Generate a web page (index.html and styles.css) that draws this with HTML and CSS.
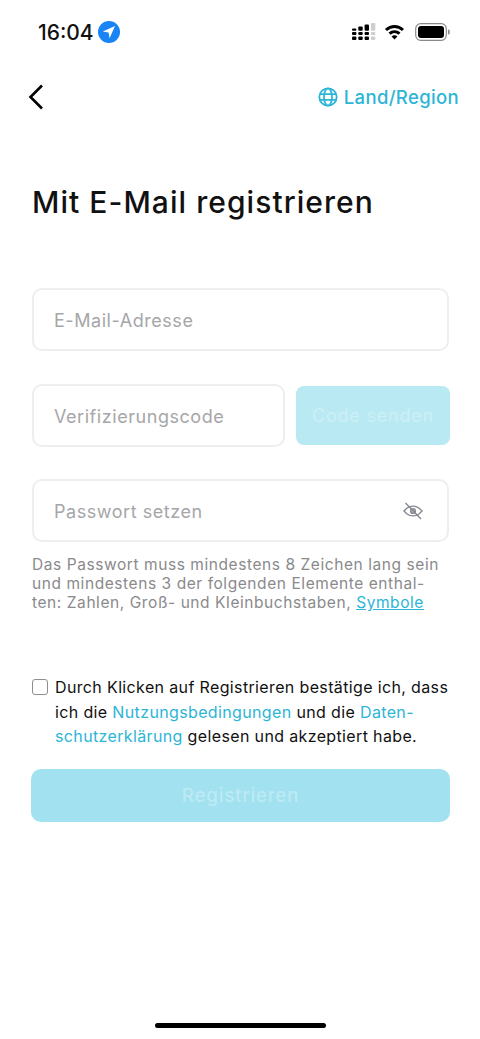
FILE: index.html
```html
<!DOCTYPE html>
<html lang="de">
<head>
  <meta charset="UTF-8" />
  <meta name="viewport" content="width=device-width, initial-scale=1.0"/>
  <title>Registrieren</title>
  <link rel="stylesheet" href="styles.css">
</head>
<body>

<div class="page">
  <div class="status-bar">
    <div class="status-left">
      <span class="time">16:04</span>
      <svg class="loc" width="22" height="22" viewBox="0 0 22 22">
        <circle cx="11" cy="11" r="11" fill="#1a84f5"/>
        <path d="M17 5 L4.8 10.4 L10.6 11.4 L11.6 17.2 Z" fill="#fff"/>
      </svg>
    </div>
    <div class="status-right">
      <svg class="signal" width="25" height="18" viewBox="0 0 25 18">
        <g fill="#000">
          <rect x="0" y="13.5" width="4.4" height="3.5" rx="1"/>
          <rect x="6.3" y="13.5" width="4.4" height="3.5" rx="1"/>
          <rect x="12.6" y="13.5" width="4.4" height="3.5" rx="1"/>
          <rect x="0" y="9" width="4.4" height="3" rx="1"/>
          <rect x="6.3" y="9" width="4.4" height="3" rx="1"/>
          <rect x="12.6" y="9" width="4.4" height="3" rx="1"/>
          <rect x="0" y="5.5" width="4.4" height="2.2" rx="1"/>
          <rect x="6.3" y="3.5" width="4.4" height="4.2" rx="1"/>
          <rect x="12.6" y="1.5" width="4.4" height="6.2" rx="1"/>
        </g>
        <g fill="#cfcfcf">
          <rect x="18.9" y="13.5" width="4.4" height="3.5" rx="1"/>
          <rect x="18.9" y="9" width="4.4" height="3" rx="1"/>
          <rect x="18.9" y="0" width="4.4" height="7.7" rx="1"/>
        </g>
      </svg>
      <svg width="21" height="16" viewBox="0 0 21 16">
        <path d="M2 6 C7 1.4 14 1.4 19 6" fill="none" stroke="#000" stroke-width="3"/>
        <path d="M5.5 9.6 C8.4 7 12.6 7 15.5 9.6" fill="none" stroke="#000" stroke-width="3"/>
        <path d="M10.5 15.5 L7.6 12.4 C9.3 11 11.7 11 13.4 12.4 Z" fill="#000"/>
      </svg>
      <svg width="35" height="18" viewBox="0 0 35 18">
        <rect x="0.7" y="0.7" width="30.6" height="16.6" rx="5" fill="none" stroke="#8a8a8a" stroke-width="1.2"/>
        <rect x="3" y="3" width="26" height="12" rx="3" fill="#000"/>
        <rect x="33" y="6.5" width="1.6" height="5" rx="0.8" fill="#8a8a8a"/>
      </svg>
    </div>
  </div>

  <div class="nav">
    <svg class="back" width="18" height="28" viewBox="0 0 18 28">
      <path d="M15 2.5 L3.5 14 L15 25.5" fill="none" stroke="#000" stroke-width="2.6"/>
    </svg>
    <div class="region">
      <svg width="20" height="20" viewBox="0 0 20 20" fill="none" stroke="#2cb5d6" stroke-width="1.8">
        <circle cx="10" cy="10" r="8.7"/>
        <ellipse cx="10" cy="10" rx="4" ry="8.7"/>
        <path d="M2 7.2 H18 M2 12.8 H18"/>
      </svg>
      <span>Land/Region</span>
    </div>
  </div>

  <h1 class="title">Mit E-Mail registrieren</h1>

  <div class="field field-email">
    <span class="placeholder">E-Mail-Adresse</span>
  </div>

  <div class="code-row">
    <div class="field field-code">
      <span class="placeholder">Verifizierungscode</span>
    </div>
    <button class="send-btn">Code senden</button>
  </div>

  <div class="field field-pass">
    <span class="placeholder">Passwort setzen</span>
    <svg width="20" height="18" viewBox="0 0 20 18" fill="none" stroke="#85888f" stroke-width="1.4">
      <path d="M1 9 L4 6 C7.5 3.6 12.5 3.6 16 6 L19 9 L16 12 C12.5 14.4 7.5 14.4 4 12 Z"/>
      <circle cx="10" cy="9" r="2.4" fill="#b5b7bb"/>
      <path d="M2.5 1 L18 17"/>
    </svg>
  </div>

  <p class="hint">Das Passwort muss mindestens 8 Zeichen lang sein<br>und mindestens 3 der folgenden Elemente enthal-<br>ten: Zahlen, Groß- und Kleinbuchstaben, <a class="link" href="#">Symbole</a></p>

  <div class="agree">
    <span class="checkbox"></span>
    <p>Durch Klicken auf Registrieren bestätige ich, dass<br>ich die <span class="cyan">Nutzungsbedingungen</span> und die <span class="cyan">Daten-<br>schutzerklärung</span> gelesen und akzeptiert habe.</p>
  </div>

  <button class="submit-btn">Registrieren</button>

  <div class="home-bar"></div>
</div>

</body>
</html>
```

FILE: styles.css
```css
* {
  box-sizing: border-box;
}

body {
  font-family: Inter, "Noto Sans", sans-serif;
  background: #fff;
  color: #111;
  margin: 0;
  padding: 0;
}

.page {
  width: 480px;
  height: 1039px;
  display: flex;
  flex-direction: column;
  padding: 0 30px 0 32px;
  overflow: hidden;
}

.status-bar {
  display: flex;
  justify-content: space-between;
  align-items: center;
  height: 22px;
  margin: 21px 0 0 6px;
}

.status-left {
  display: flex;
  align-items: center;
  gap: 4px;
}

.time {
  font-size: 21px;
  font-weight: 500;
}

.status-right {
  display: flex;
  align-items: center;
  gap: 10px;
}

.signal {
  margin-right: -3px;
}

.nav {
  display: flex;
  justify-content: space-between;
  align-items: center;
  height: 32px;
  margin-top: 38px;
}

.back {
  margin-left: -5px;
}

.region {
  display: flex;
  align-items: center;
  gap: 6px;
  margin-right: -9px;
  color: #2cb5d6;
  font-size: 18.5px;
  font-weight: 500;
  letter-spacing: 0.35px;
}

.title {
  font-size: 30px;
  font-weight: 500;
  line-height: 40px;
  letter-spacing: 1.05px;
  margin: 69px 0 0;
}

.field {
  display: flex;
  align-items: center;
  justify-content: space-between;
  height: 63px;
  border: 2px solid #eeeeef;
  border-radius: 10px;
  padding: 0 24px 0 20px;
}

.field-email {
  margin: 66px 1px 0 0;
}

.placeholder {
  color: #a6a6a8;
  font-size: 18px;
  letter-spacing: 0.55px;
  padding-top: 1px;
}

.code-row {
  display: flex;
  align-items: center;
  gap: 11px;
  margin-top: 33px;
}

.field-code {
  width: 253px;
}

.send-btn {
  width: 154px;
  height: 59px;
  border: none;
  border-radius: 8px;
  background: #b9e9f2;
  color: #cdeff6;
  font-family: inherit;
  font-size: 18px;
  letter-spacing: 0.8px;
  padding: 0;
}

.field-pass {
  margin: 32px 1px 0 0;
}

.hint {
  margin: 13px 0 0;
  color: #8a8a8c;
  font-size: 15.5px;
  line-height: 19px;
  letter-spacing: 0.57px;
  white-space: nowrap;
}

.link {
  color: #2cb5d6;
  text-decoration: underline;
}

.agree {
  display: flex;
  align-items: flex-start;
  gap: 7px;
  margin-top: 63px;
}

.checkbox {
  flex: none;
  width: 16px;
  height: 16px;
  margin-top: 4px;
  border: 1.5px solid #8f8f8f;
  border-radius: 3px;
}

.agree p {
  margin: 0;
  font-size: 16px;
  line-height: 24.5px;
  letter-spacing: 0.36px;
  white-space: nowrap;
}

.cyan {
  color: #2cb5d6;
}

.submit-btn {
  width: 419px;
  height: 53px;
  flex: none;
  margin: 20px 0 0 -1px;
  border: none;
  border-radius: 10px;
  background: #a1e1f0;
  color: #bdeaf4;
  font-family: inherit;
  font-size: 19px;
  font-weight: 500;
  letter-spacing: 0.65px;
  padding: 0;
}

.home-bar {
  width: 171px;
  height: 5px;
  flex: none;
  margin: auto 0 11px 123px;
  background: #000;
  border-radius: 3px;
}
```
